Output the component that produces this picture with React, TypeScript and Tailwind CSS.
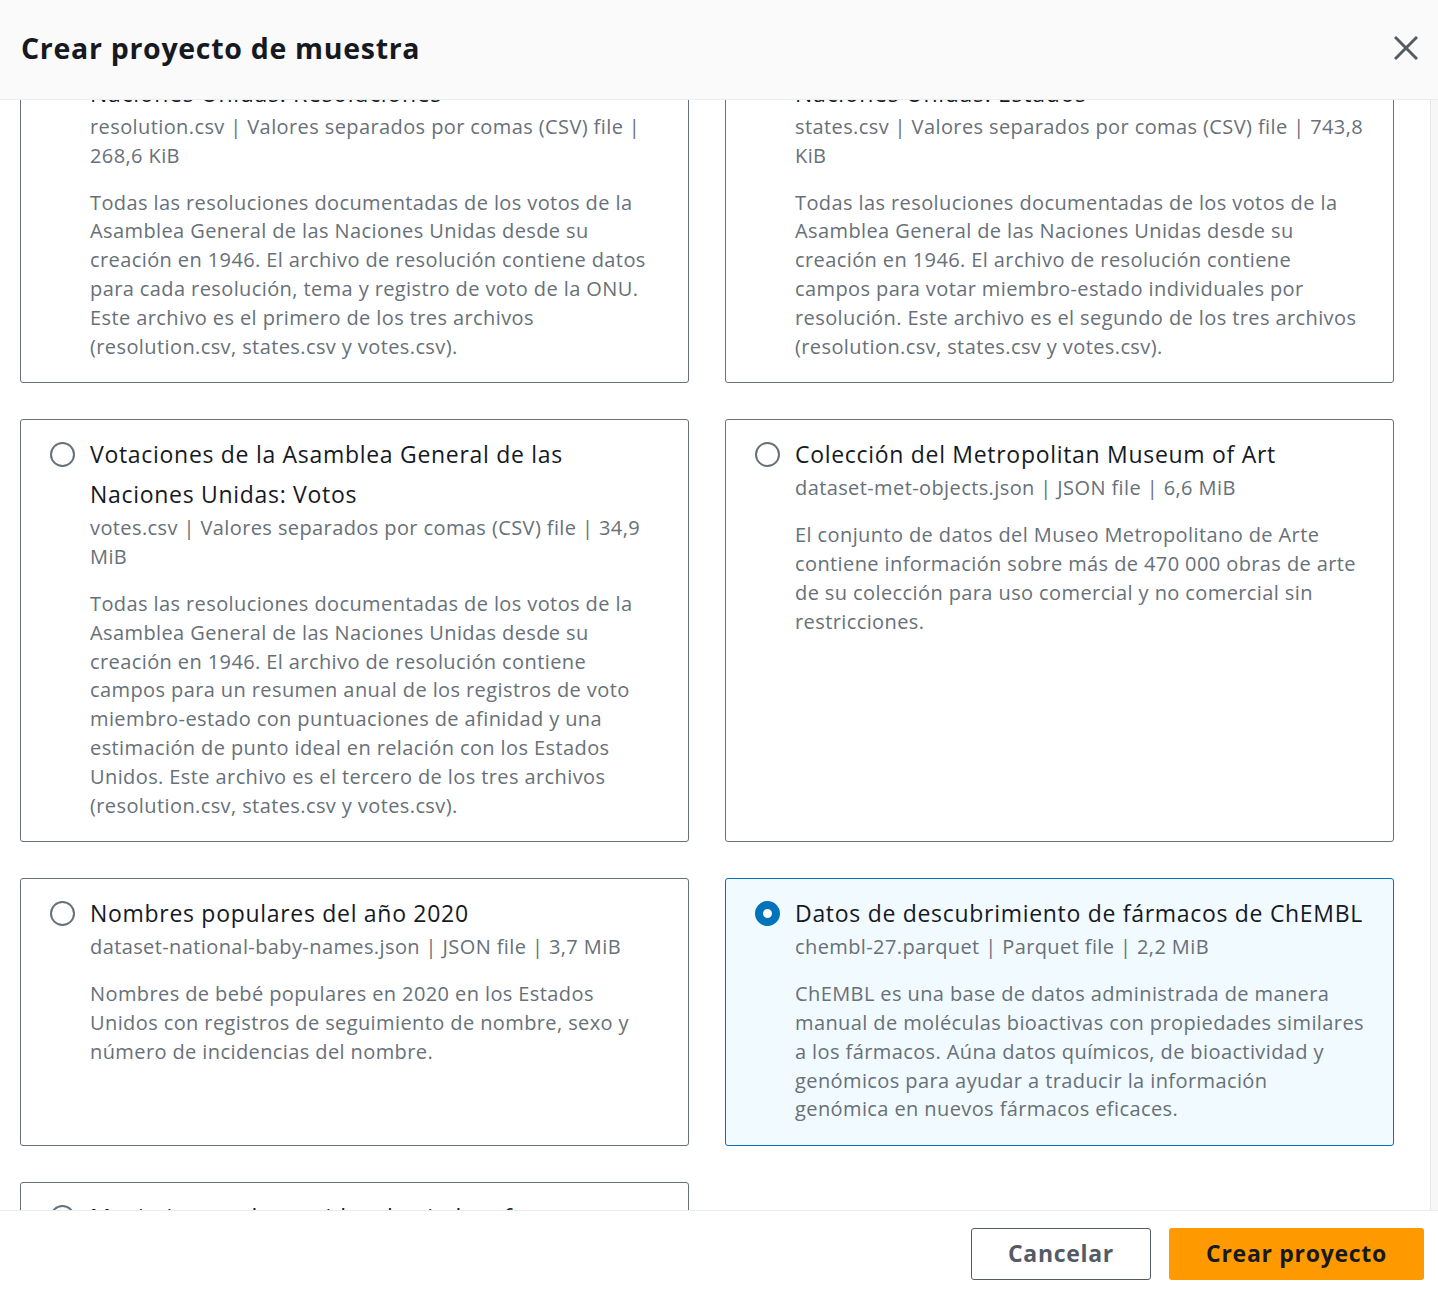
import React, { useLayoutEffect, useRef } from 'react';

type Dataset = {
  id: number;
  title: string;
  meta: string;
  description: string;
};

const datasets: Dataset[] = [
  {
    id: 1,
    title: 'Votaciones de la Asamblea General de las Naciones Unidas: Resoluciones',
    meta: 'resolution.csv | Valores separados por comas (CSV) file | 268,6 KiB',
    description:
      'Todas las resoluciones documentadas de los votos de la Asamblea General de las Naciones Unidas desde su creación en 1946. El archivo de resolución contiene datos para cada resolución, tema y registro de voto de la ONU. Este archivo es el primero de los tres archivos (resolution.csv, states.csv y votes.csv).',
  },
  {
    id: 2,
    title: 'Votaciones de la Asamblea General de las Naciones Unidas: Estados',
    meta: 'states.csv | Valores separados por comas (CSV) file | 743,8 KiB',
    description:
      'Todas las resoluciones documentadas de los votos de la Asamblea General de las Naciones Unidas desde su creación en 1946. El archivo de resolución contiene campos para votar miembro-estado individuales por resolución. Este archivo es el segundo de los tres archivos (resolution.csv, states.csv y votes.csv).',
  },
  {
    id: 3,
    title: 'Votaciones de la Asamblea General de las Naciones Unidas: Votos',
    meta: 'votes.csv | Valores separados por comas (CSV) file | 34,9 MiB',
    description:
      'Todas las resoluciones documentadas de los votos de la Asamblea General de las Naciones Unidas desde su creación en 1946. El archivo de resolución contiene campos para un resumen anual de los registros de voto miembro-estado con puntuaciones de afinidad y una estimación de punto ideal en relación con los Estados Unidos. Este archivo es el tercero de los tres archivos (resolution.csv, states.csv y votes.csv).',
  },
  {
    id: 4,
    title: 'Colección del Metropolitan Museum of Art',
    meta: 'dataset-met-objects.json | JSON file | 6,6 MiB',
    description:
      'El conjunto de datos del Museo Metropolitano de Arte contiene información sobre más de 470 000 obras de arte de su colección para uso comercial y no comercial sin restricciones.',
  },
  {
    id: 5,
    title: 'Nombres populares del año 2020',
    meta: 'dataset-national-baby-names.json | JSON file | 3,7 MiB',
    description:
      'Nombres de bebé populares en 2020 en los Estados Unidos con registros de seguimiento de nombre, sexo y número de incidencias del nombre.',
  },
  {
    id: 6,
    title: 'Datos de descubrimiento de fármacos de ChEMBL',
    meta: 'chembl-27.parquet | Parquet file | 2,2 MiB',
    description:
      'ChEMBL es una base de datos administrada de manera manual de moléculas bioactivas con propiedades similares a los fármacos. Aúna datos químicos, de bioactividad y genómicos para ayudar a traducir la información genómica en nuevos fármacos eficaces.',
  },
  {
    id: 7,
    title: 'Movimientos de partidas de ajedrez famosas',
    meta: 'chess-games.csv | Valores separados por comas (CSV) file | 7,3 MiB',
    description: 'Movimientos de partidas de ajedrez.',
  },
];

const DatasetCard = ({ item, selected, onSelect }: { item: Dataset; selected: boolean; onSelect: (id: number) => void }) => {
  return (
    <div
      onClick={() => onSelect(item.id)}
      className={`flex gap-[15px] rounded-[3px] border pt-[14px] pb-[21px] pl-[29px] pr-[28px] cursor-pointer ${
        selected ? 'border-[#0073bb] bg-[#f1faff]' : 'border-[#687078] bg-white'
      }`}
    >
      {selected ? (
        <span className="mt-[8px] h-[25px] w-[25px] shrink-0 rounded-full border-[8px] border-[#0073bb] bg-white" />
      ) : (
        <span className="mt-[8px] h-[25px] w-[25px] shrink-0 rounded-full border-2 border-[#687078] bg-white" />
      )}
      <div className="flex min-w-0 flex-col">
        <div className="text-[23px] leading-[40px] tracking-[0.7px] text-[#16191f]">{item.title}</div>
        <div className="text-[20px] leading-[28.8px] tracking-[0.4px] text-[#687078]">{item.meta}</div>
        <p className="mt-[18px] text-[20px] leading-[28.8px] tracking-[0.4px] text-[#687078]">{item.description}</p>
      </div>
    </div>
  );
};

const App = () => {
  const [selected, setSelected] = React.useState(6);
  const scrollRef = useRef<HTMLDivElement>(null);

  useLayoutEffect(() => {
    // the dialog is shown scrolled a little way down the list
    if (scrollRef.current) scrollRef.current.scrollTop = 102;
  }, []);

  return (
    <div className="flex h-[1296px] w-full flex-col bg-white font-['Open_Sans',sans-serif]">
      {/* Header */}
      <header className="flex h-[100px] shrink-0 items-center justify-between border-b border-[#eaeded] bg-[#fafafa] pl-[21px] pr-[20px] pb-[4px]">
        <h1 className="text-[28.5px] font-bold leading-[36px] tracking-[0.7px] text-[#16191f]">Crear proyecto de muestra</h1>
        <button className="flex h-[24px] w-[24px] items-center justify-center">
          <svg width="24" height="24" viewBox="0 0 24 24" fill="none" stroke="#545b64" strokeWidth="3" strokeLinecap="butt">
            <line x1="1" y1="1" x2="23" y2="23" />
            <line x1="23" y1="1" x2="1" y2="23" />
          </svg>
        </button>
      </header>

      {/* Scrollable list */}
      <div className="flex min-h-0 flex-1">
        <div ref={scrollRef} className="min-w-0 flex-1 overflow-hidden">
          <div className="grid grid-cols-2 gap-x-[36px] gap-y-[36px] pl-[20px] pr-[36px] pt-[20px] pb-[20px]">
            {datasets.map((d) => (
              <DatasetCard key={d.id} item={d} selected={selected === d.id} onSelect={setSelected} />
            ))}
          </div>
        </div>
        <div className="w-[8px] shrink-0 border-l border-[#e6e6e6] bg-[#f7f7f7]" />
      </div>

      {/* Footer */}
      <footer className="flex h-[86px] shrink-0 items-center justify-end gap-[18px] border-t border-[#eaeded] bg-white pr-[14px]">
        <button className="h-[52px] w-[180px] rounded-[3px] border border-[#545b64] bg-white text-[23px] font-bold tracking-[0.7px] text-[#545b64]">
          Cancelar
        </button>
        <button className="h-[52px] w-[255px] rounded-[3px] bg-[#ff9900] text-[23px] font-bold tracking-[0.7px] text-[#16191f]">
          Crear proyecto
        </button>
      </footer>
    </div>
  );
};

export default App;
